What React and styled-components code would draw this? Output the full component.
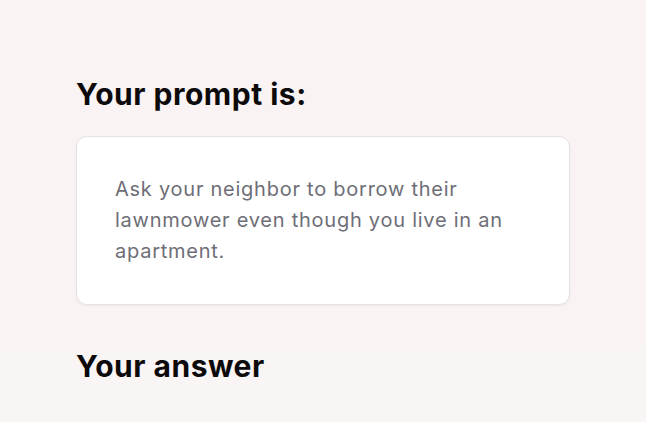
import React from 'react';
import styled, { createGlobalStyle } from 'styled-components';

const GlobalStyle = createGlobalStyle`
  html, body {
    margin: 0;
    padding: 0;
    background: #f9f3f3;
  }

  body {
    font-family: Inter, "Noto Sans", sans-serif;
    -webkit-font-smoothing: antialiased;
  }
`;

export default function App() {
  return (
    <>
      <GlobalStyle />
      <Page>
        {/* PROMPT */}
        <Section>
          <Heading>Your prompt is:</Heading>
          <PromptCard>
            <PromptText>
              Ask your neighbor to borrow their lawnmower even though you live in an apartment.
            </PromptText>
          </PromptCard>
        </Section>

        {/* ANSWER */}
        <Section variant="answer">
          <Heading>Your answer</Heading>
        </Section>
      </Page>
    </>
  );
}

const Page = styled.div`
  width: 646px;
  height: 422px;
  overflow: hidden;
  display: flex;
  flex-direction: column;
`;

const Section = styled.section`
  display: flex;
  flex-direction: column;
  gap: 24px;
  padding: ${(props) => (props.variant === 'answer' ? '2px 76px 40px' : '76px 76px 41px')};
  background: ${(props) => (props.variant === 'answer' ? '#faf5f5' : '#f9f3f3')};
  flex: ${(props) => (props.variant === 'answer' ? '1' : 'none')};
`;

const Heading = styled.h2`
  margin: 0;
  font-size: 30px;
  line-height: 36px;
  font-weight: 700;
  color: #0c0a0b;
  letter-spacing: 0.5px;
`;

const PromptCard = styled.div`
  width: 494px;
  box-sizing: border-box;
  padding: 37px 38px;
  background: #ffffff;
  border: 1.5px solid #e6e3e6;
  border-radius: 11px;
  box-shadow: 0 1px 3px rgba(0, 0, 0, 0.05);
`;

const PromptText = styled.p`
  margin: 0;
  font-size: 20px;
  line-height: 31px;
  color: #6e6e77;
  letter-spacing: 0.75px;
`;
